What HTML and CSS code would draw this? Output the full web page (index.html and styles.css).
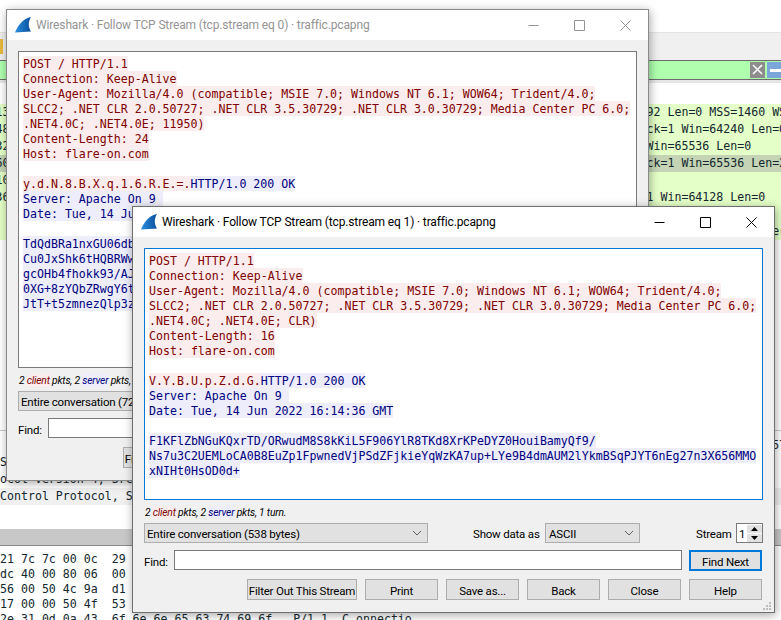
FILE: index.html
```html
<!DOCTYPE html>
<html lang="en">
<head>
    <meta charset="UTF-8">
    <title>Wireshark - Follow TCP Stream</title>
    <link rel="stylesheet" href="styles.css">
</head>
<body>
<svg class="defs" width="0" height="0">
    <defs>
        <linearGradient id="finFill" x1="0" y1="0" x2="1" y2="0">
            <stop offset="0" stop-color="#2b8fe0"/>
            <stop offset="1" stop-color="#0b4f9c"/>
        </linearGradient>
    </defs>
</svg>

<!-- main wireshark window behind the dialogs -->
<div class="main-window">
    <div class="menu-area"></div>
    <div class="toolbar"><span class="tool-icon"></span></div>
    <div class="filter-bar">
        <span class="filter-fill"></span>
        <span class="filter-clear"><svg width="15" height="15" viewBox="0 0 15 15"><path d="M3 3l9 9M12 3l-9 9" stroke="#fff" stroke-width="1.6" fill="none"/></svg></span>
        <span class="filter-apply"><span class="apply-dash"></span></span>
    </div>
    <div class="list-head"></div>
    <div class="packet-list">
        <div class="pkt"><span class="pkt-left">13</span><span>92 Len=0 MSS=1460 WS=256</span></div>
        <div class="pkt"><span class="pkt-left">48</span><span>ck=1 Win=64240 Len=0 MSS</span></div>
        <div class="pkt"><span class="pkt-left">32</span><span>Win=65536 Len=0</span></div>
        <div class="pkt pkt-selected"><span class="pkt-left">60</span><span>ck=1 Win=65536 Len=24</span></div>
        <div class="pkt"><span class="pkt-left">10</span><span></span></div>
        <div class="pkt"><span class="pkt-left">36</span><span>1 Win=64128 Len=0</span></div>
        <div class="pkt"><span class="pkt-left"></span><span></span></div>
        <div class="pkt"><span class="pkt-left"></span><span>                 Server</span></div>
    </div>
    <div class="details">
        <div class="detail-row detail-far"><span class="pkt-left"></span><span>                  57</span></div>
        <div class="detail-row">S</div>
        <div class="detail-row">ocol Version 4, Src: 192.168.1.10</div>
        <div class="detail-row detail-active">Control Protocol, Src Port: 49163</div>
    </div>
    <div class="pane-bar"></div>
    <div class="hex">
        <div>21 7c 7c 00 0c  29 8e 7a 08 00 45 00</div>
        <div>dc 40 00 80 06  00 00 c0 a8 01 0a c0</div>
        <div>56 00 50 4c 9a  d1 c3 22 17 89 50 18</div>
        <div>17 00 00 50 4f  53 54 20 2f 20 48 54</div>
        <div>2e 31 0d 0a 43  6f 6e 6e 65 63 74 69 6f   P/1.1..C onnectio</div>
    </div>
</div>

<!-- stream 0, inactive dialog -->
<div class="window window-back">
    <div class="titlebar">
        <svg class="fin" width="16" height="16" viewBox="0 0 16 16"><path d="M16 0C9 1 3 8 0 15.5L16 14.5C13 10 13 5 16 0Z" fill="url(#finFill)"/></svg>
        <span class="title">Wireshark · Follow TCP Stream (tcp.stream eq 0) · traffic.pcapng</span>
        <span class="win-btn"><svg width="11" height="11" viewBox="0 0 11 11"><path d="M0.5 5.5h10" stroke="currentColor" fill="none"/></svg></span>
        <span class="win-btn"><svg width="11" height="11" viewBox="0 0 11 11"><path d="M0.5 0.5h10v10h-10z" stroke="currentColor" fill="none"/></svg></span>
        <span class="win-btn"><svg width="11" height="11" viewBox="0 0 11 11"><path d="M0.5 0.5l10 10M10.5 0.5l-10 10" stroke="currentColor" fill="none"/></svg></span>
    </div>
    <div class="dialog">
        <div class="stream-box">
            <div class="line c">POST / HTTP/1.1</div>
            <div class="line c">Connection: Keep-Alive</div>
            <div class="line c">User-Agent: Mozilla/4.0 (compatible; MSIE 7.0; Windows NT 6.1; WOW64; Trident/4.0;</div>
            <div class="line c">SLCC2; .NET CLR 2.0.50727; .NET CLR 3.5.30729; .NET CLR 3.0.30729; Media Center PC 6.0;</div>
            <div class="line c">.NET4.0C; .NET4.0E; 11950)</div>
            <div class="line c">Content-Length: 24</div>
            <div class="line c">Host: flare-on.com</div>
            <div class="line">&nbsp;</div>
            <div class="line"><span class="c">y.d.N.8.B.X.q.1.6.R.E.=.</span><span class="s">HTTP/1.0 200 OK</span></div>
            <div class="line s">Server: Apache On 9&nbsp;</div>
            <div class="line s">Date: Tue, 14 Jun 2022 16:14:34 GMT</div>
            <div class="line">&nbsp;</div>
            <div class="line s">TdQdBRa1nxGU06dbX</div>
            <div class="line s">Cu0JxShk6tHQBRWwX</div>
            <div class="line s">gcOHb4fhokk93/AJX</div>
            <div class="line s">0XG+8zYQbZRwgY6tX</div>
            <div class="line s">JtT+t5zmnezQlp3zX</div>
        </div>
        <div class="info">2 <span class="info-c">client</span> pkts, 2 <span class="info-s">server</span> pkts, 2 turns.</div>
        <div class="row">
            <span class="combo combo-wide">Entire conversation (720 bytes)</span>
        </div>
        <div class="row row-find">
            <span class="find-label">Find:</span>
            <span class="find-input"></span>
            <span class="btn">Find Next</span>
        </div>
        <div class="row row-buttons">
            <span class="btn btn-filter">Filter Out This Stream</span>
            <span class="btn">Print</span>
            <span class="btn">Save as...</span>
            <span class="btn">Back</span>
            <span class="btn">Close</span>
            <span class="btn">Help</span>
        </div>
    </div>
</div>

<!-- stream 1, focused dialog -->
<div class="window window-front">
    <div class="titlebar">
        <svg class="fin" width="16" height="16" viewBox="0 0 16 16"><path d="M16 0C9 1 3 8 0 15.5L16 14.5C13 10 13 5 16 0Z" fill="url(#finFill)"/></svg>
        <span class="title">Wireshark · Follow TCP Stream (tcp.stream eq 1) · traffic.pcapng</span>
        <span class="win-btn"><svg width="11" height="11" viewBox="0 0 11 11"><path d="M0.5 5.5h10" stroke="currentColor" fill="none"/></svg></span>
        <span class="win-btn"><svg width="11" height="11" viewBox="0 0 11 11"><path d="M0.5 0.5h10v10h-10z" stroke="currentColor" fill="none"/></svg></span>
        <span class="win-btn"><svg width="11" height="11" viewBox="0 0 11 11"><path d="M0.5 0.5l10 10M10.5 0.5l-10 10" stroke="currentColor" fill="none"/></svg></span>
    </div>
    <div class="dialog">
        <div class="stream-box stream-focus">
            <div class="line c">POST / HTTP/1.1</div>
            <div class="line c">Connection: Keep-Alive</div>
            <div class="line c">User-Agent: Mozilla/4.0 (compatible; MSIE 7.0; Windows NT 6.1; WOW64; Trident/4.0;</div>
            <div class="line c">SLCC2; .NET CLR 2.0.50727; .NET CLR 3.5.30729; .NET CLR 3.0.30729; Media Center PC 6.0;</div>
            <div class="line c">.NET4.0C; .NET4.0E; CLR)</div>
            <div class="line c">Content-Length: 16</div>
            <div class="line c">Host: flare-on.com</div>
            <div class="line">&nbsp;</div>
            <div class="line"><span class="c">V.Y.B.U.p.Z.d.G.</span><span class="s">HTTP/1.0 200 OK</span></div>
            <div class="line s">Server: Apache On 9&nbsp;</div>
            <div class="line s">Date: Tue, 14 Jun 2022 16:14:36 GMT</div>
            <div class="line">&nbsp;</div>
            <div class="line s">F1KFlZbNGuKQxrTD/ORwudM8S8kKiL5F906YlR8TKd8XrKPeDYZ0HouiBamyQf9/</div>
            <div class="line s">Ns7u3C2UEMLoCA0B8EuZp1FpwnedVjPSdZFjkieYqWzKA7up+LYe9B4dmAUM2lYkmBSqPJYT6nEg27n3X656MMO</div>
            <div class="line s">xNIHt0HsOD0d+</div>
        </div>
        <div class="info">2 <span class="info-c">client</span> pkts, 2 <span class="info-s">server</span> pkts, 1 turn.</div>
        <div class="row">
            <span class="combo combo-wide">Entire conversation (538 bytes)<svg class="chevron" width="10" height="6" viewBox="0 0 10 6"><path d="M1 1l4 4 4-4" stroke="#606060" fill="none"/></svg></span>
            <span class="show-label">Show data as</span>
            <span class="combo combo-small">ASCII<svg class="chevron" width="10" height="6" viewBox="0 0 10 6"><path d="M1 1l4 4 4-4" stroke="#606060" fill="none"/></svg></span>
            <span class="stream-label">Stream</span>
            <span class="spin">
                <span class="spin-value">1</span>
                <span class="spin-arrows">
                    <span class="spin-arrow"><svg width="7" height="4" viewBox="0 0 7 4"><path d="M3.5 0L7 4H0z" fill="#000"/></svg></span>
                    <span class="spin-arrow"><svg width="7" height="4" viewBox="0 0 7 4"><path d="M0 0h7L3.5 4z" fill="#000"/></svg></span>
                </span>
            </span>
        </div>
        <div class="row row-find">
            <span class="find-label">Find:</span>
            <span class="find-input"></span>
            <span class="btn btn-default">Find Next</span>
        </div>
        <div class="row row-buttons">
            <span class="btn btn-filter">Filter Out This Stream</span>
            <span class="btn">Print</span>
            <span class="btn">Save as...</span>
            <span class="btn">Back</span>
            <span class="btn">Close</span>
            <span class="btn">Help</span>
        </div>
    </div>
    <svg class="grip" width="9" height="9" viewBox="0 0 9 9"><path d="M6 0h2v2H6zM3 3h2v2H3zM6 3h2v2H6zM0 6h2v2H0zM3 6h2v2H3zM6 6h2v2H6z" fill="#bdbdbd"/></svg>
</div>
</body>
</html>
```

FILE: styles.css
```css
html, body {
    margin: 0;
    padding: 0;
    height: 620px;
    overflow: hidden;
    background: #fff;
}
body {
    position: relative;
    font-family: Roboto, sans-serif;
    font-size: 11.5px;
    letter-spacing: -0.2px;
    color: #000;
}
.defs {
    position: absolute;
}

/* main window */
.main-window {
    height: 620px;
    overflow: hidden;
    font-family: "DejaVu Sans Mono", monospace;
    font-size: 11.6px;
    letter-spacing: 0;
    color: #12272e;
}
.menu-area {
    height: 32px;
    border-bottom: 1px solid #e4e4e4;
}
.toolbar {
    height: 27px;
    background: #f0f0f0;
    display: flex;
    align-items: center;
}
.tool-icon {
    width: 3px;
    height: 15px;
    background: #e8b93c;
}
.filter-bar {
    height: 18px;
    border-top: 1px solid #6b6b6b;
    border-bottom: 1px solid #6b6b6b;
    display: flex;
    background: #afffaf;
}
.filter-fill {
    flex: 1;
}
.filter-clear {
    width: 15px;
    margin: 1px 2px 1px 0;
    background: #8c8c8c;
    display: flex;
}
.filter-apply {
    width: 14px;
    margin: 1px 0;
    background: #7ba6da;
    display: flex;
    align-items: center;
    justify-content: flex-end;
}
.apply-dash {
    width: 11px;
    height: 3px;
    background: #fff;
}
.list-head {
    height: 24px;
    background: #fff;
    border-top: 3px solid #e6e6e6;
    box-sizing: border-box;
}
.packet-list {
    height: 326px;
}
.pkt {
    height: 17px;
    line-height: 17px;
    background: #e4ffc7;
    display: flex;
    white-space: pre;
    overflow: hidden;
}
.pkt-selected {
    background: #c4d4b4;
}
.pkt-left {
    flex: none;
    width: 646.5px;
    text-indent: -4.5px;
}
.details {
    border-top: 1px solid #c8c8c8;
    padding-top: 6px;
    height: 92px;
}
.detail-row {
    height: 17px;
    line-height: 17px;
    display: flex;
    white-space: pre;
}
.detail-active {
    background: #f0f0f0;
}
.pane-bar {
    height: 16px;
    background: #c8c8c8;
    border-bottom: 1px solid #8a8a8a;
}
.hex {
    padding-top: 6px;
    line-height: 15px;
}
.hex div {
    white-space: pre;
}

/* follow stream dialogs */
.window {
    position: absolute;
    box-sizing: border-box;
    display: flex;
    flex-direction: column;
    background: #f0f0f0;
    border: 1px solid #6f6f6f;
    box-shadow: 1px 2px 9px rgba(0, 0, 0, 0.35);
}
.window-back {
    left: 6px;
    top: 9px;
    width: 643px;
    height: 472px;
    border-color: #8a8a8a;
}
.window-front {
    left: 132px;
    top: 206px;
    width: 643px;
    height: 407px;
}
.titlebar {
    flex: none;
    height: 30px;
    background: #fff;
    display: flex;
    align-items: center;
}
.fin {
    margin: 0 5px 0 8px;
}
.title {
    flex: 1;
    font-size: 12px;
    letter-spacing: -0.14px;
}
.window-back .title,
.window-back .win-btn {
    color: #949494;
}
.win-btn {
    width: 46px;
    display: flex;
    align-items: center;
    justify-content: center;
}
.dialog {
    flex: 1;
    min-height: 0;
    display: flex;
    flex-direction: column;
    padding: 11px 11px 12px;
}
.stream-box {
    flex: 1;
    min-height: 0;
    box-sizing: border-box;
    padding: 4px;
    background: #fff;
    border: 1px solid #7a7a7a;
    overflow: hidden;
    font-family: "DejaVu Sans Mono", monospace;
    font-size: 11.6px;
    letter-spacing: 0;
}
.stream-focus {
    border-color: #0078d7;
}
.line {
    width: fit-content;
    height: 15px;
    line-height: 17px;
    display: flex;
    white-space: pre;
}
.c {
    color: #7f0000;
    background: #fbeded;
}
.s {
    color: #00007f;
    background: #ededfb;
}
.info {
    flex: none;
    height: 23px;
    line-height: 26px;
    font-size: 10.3px;
    font-style: italic;
    padding-left: 1px;
}
.info-c {
    color: #7f0000;
    background: #fbeded;
}
.info-s {
    color: #00007f;
    background: #ededfb;
}
.row {
    flex: none;
    display: flex;
    align-items: center;
    height: 20px;
}
.row-find {
    height: 21px;
    margin: 7px 1px 0 0;
}
.row-buttons {
    height: 21px;
    margin: 8px 1px 0 0;
    justify-content: flex-end;
    gap: 8px;
}
.window-back .row-buttons {
    margin-right: -1px;
}
.combo {
    box-sizing: border-box;
    height: 20px;
    padding: 2px 5px 0 2px;
    background: #e1e1e1;
    border: 1px solid #adadad;
    display: flex;
    align-items: center;
    justify-content: space-between;
    white-space: nowrap;
}
.combo-wide {
    width: 284px;
}
.combo-small {
    width: 95px;
    padding-left: 3px;
}
.chevron {
    margin-top: -2px;
}
.show-label {
    margin-left: 45px;
    width: 72px;
    padding-top: 2px;
    white-space: nowrap;
}
.stream-label {
    margin-left: 56px;
    width: 40px;
    padding-top: 2px;
}
.spin {
    box-sizing: border-box;
    width: 27px;
    height: 20px;
    background: #fff;
    border: 1px solid #7a7a7a;
    display: flex;
    align-items: center;
}
.spin-value {
    flex: 1;
    padding: 2px 0 0 2px;
}
.spin-arrows {
    width: 15px;
    display: flex;
    flex-direction: column;
    gap: 1px;
}
.spin-arrow {
    height: 8px;
    background: #e1e1e1;
    display: flex;
    align-items: center;
    justify-content: center;
}
.find-label {
    width: 30px;
    padding-top: 2px;
}
.find-input {
    box-sizing: border-box;
    flex: 1;
    height: 20px;
    background: #fff;
    border: 1px solid #7a7a7a;
    margin-right: 7px;
    align-self: flex-start;
}
.btn {
    box-sizing: border-box;
    flex: none;
    width: 73px;
    height: 21px;
    padding-top: 2px;
    background: #e1e1e1;
    border: 1px solid #adadad;
    display: flex;
    align-items: center;
    justify-content: center;
    white-space: nowrap;
}
.btn-filter {
    width: 110px;
}
.btn-default {
    border: 2px solid #0078d7;
}
.grip {
    position: absolute;
    right: 2px;
    bottom: 1px;
}
```
